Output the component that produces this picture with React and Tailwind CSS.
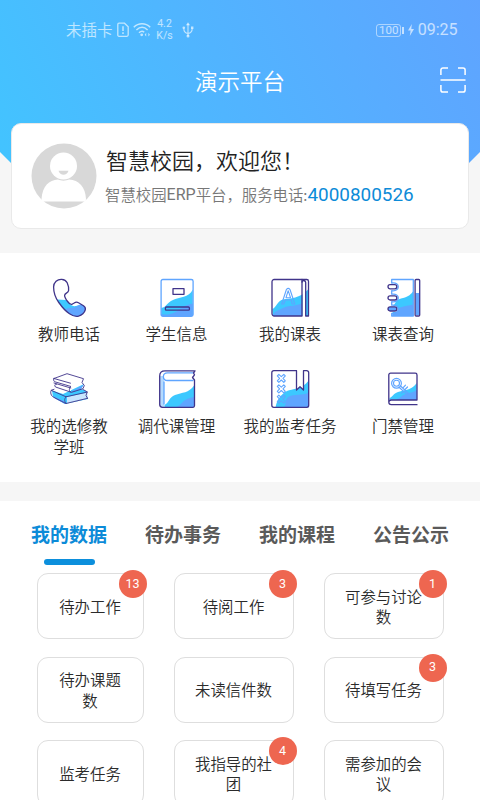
import React, { useState } from "react";

const NAVY = "#40348a";
const BLUE = "#5fa5ff";
const CYAN = "#3cc8ff";

const Icon = ({ children }) => (
  <svg
    viewBox="0 0 40 40"
    className="h-10 w-10 shrink-0"
    fill="none"
    strokeWidth="1.3"
    strokeLinejoin="round"
    strokeLinecap="round"
  >
    {children}
  </svg>
);

const handset =
  "M12.7 1.3C8.5 1 4.6 4.3 4.6 9C4.6 14.5 6.5 20 9.8 24.5C13 29 17 33.5 20.5 35.8C23.5 37.8 27 38.8 29.5 38.2C32.5 37.4 35.5 34.5 36.3 31.8C36.7 30 36 28.7 34.5 27.7L29.5 24.7C28 23.8 26.5 24 25.2 25L23 26.3C21.3 27 20 25.4 18.6 23.5C17 21.3 15.6 19.3 15.6 17.4C15.6 15 19.2 15.3 19.6 12.5C19.8 10.5 19.4 7.3 18.2 4.7C17 2.4 15 1.5 12.7 1.3Z";

const PhoneIcon = () => (
  <Icon>
    <clipPath id="handset">
      <path d={handset} />
    </clipPath>
    <g clipPath="url(#handset)">
      <path d="M0 23C6 20.5 12 22 17 22C20 24 22 29 27 28L40 24V40H0Z" fill={CYAN} />
      <path d="M14 34C18 27 24 32 29 27.5C32 25.5 36 27 38 28V40H16Z" fill={BLUE} />
    </g>
    <path d={handset} stroke={NAVY} />
  </Icon>
);

const StudentIcon = () => (
  <Icon>
    <path d="M4.3 30C9 29.5 10 24.5 16 22C22 19.3 32 19.5 35.8 11.5V38H4.3Z" fill={CYAN} />
    <path d="M4.3 36C12 38 19 34.5 23 31C27 27.5 32 26.5 35.8 25.5V38H4.3Z" fill={BLUE} />
    <rect x="4.1" y="1.5" width="32" height="36.8" rx="1.8" stroke={BLUE} />
    <rect x="16" y="10.7" width="11" height="5.6" stroke={NAVY} />
    <rect x="8.4" y="29" width="24" height="3.2" rx="1" stroke={NAVY} />
  </Icon>
);

const TimetableIcon = () => (
  <Icon>
    <path d="M2.5 31C6 30 7 23 13 21.5C20 20 30 21 38.5 11V38H3Z" fill={CYAN} />
    <path d="M3 38C4 33 8 32.5 12 30.5C18 27 22 29 32 25.5V38Z" fill={BLUE} />
    <path d="M32.5 4V38H35.5V4Z" fill="#fff" />
    <path d="M4.2 1.5H32V38H4.2A2.2 2.2 0 0 1 2 35.8V3.7A2.2 2.2 0 0 1 4.2 1.5Z" stroke={NAVY} />
    <path d="M32 1.5H36.7A1.8 1.8 0 0 1 38.5 3.3V38H35.7V4.5C35.7 2.5 32.5 2 32 4" stroke={NAVY} />
    <path
      d="M11.7 26L16.4 11.5Q18.2 9.2 20 11.5L24.8 26H22.3L21.2 22H15.2L13.8 26ZM16 19.7H20.5L18.2 12.7Z"
      stroke={BLUE}
      strokeWidth="1.1"
    />
  </Icon>
);

const NotebookIcon = () => (
  <Icon>
    <path d="M9.5 28C13 26 12 22 18 20.5C24 19.2 27 17.5 30 13.5V38H9.5Z" fill={CYAN} />
    <path d="M9.5 35C14 34 13 31 17 29.5C22 27.5 26 28 30 26.5V38H9.5Z" fill={BLUE} />
    <path
      d="M6 5.7H11C16.5 5.5 16.5 12 11 11.9H6ZM6 16.9H11C16.5 16.7 16.5 23 11 22.9H6ZM6 27.9H11C16.5 27.7 16.5 34 11 33.9H6Z"
      fill="#fff"
    />
    <path
      d="M8.7 5V1.5H30.3V38H8.7V35.5M8.7 5C17.5 3.5 17.5 14 8.7 12.7V16.2C17.5 14.7 17.5 25 8.7 23.7V27.2C17.5 25.7 17.5 36.5 8.7 35.5"
      stroke={BLUE}
    />
    <rect x="5" y="6.7" width="8.8" height="4.2" rx="2.1" fill="#fff" stroke={NAVY} />
    <rect x="5" y="17.8" width="8.8" height="4.2" rx="2.1" fill="#fff" stroke={NAVY} />
    <rect x="5" y="28.8" width="8.8" height="4.2" rx="2.1" fill={BLUE} stroke={NAVY} />
    <path d="M32.5 15H36.5V37H32.5Z" fill={BLUE} />
    <rect x="32.1" y="1.5" width="4.6" height="36.5" rx="1" stroke={NAVY} />
  </Icon>
);

const BooksIcon = () => (
  <Icon>
    <path d="M3 20.5L14 24L35 14L32 19L37 21L39 29L16 34L4 27Z" fill={CYAN} />
    <path d="M20 23L35 14.5L32 19L21 23ZM4 26L15 31L16 34L6 28.5Z" fill={BLUE} />
    <path d="M18 27L38.5 22.5V28.5L18 33.5Z" fill="#c9e6ff" />
    <path d="M6 9L18 4L34 9L22 15.5ZM7 14L22 18.5V21L7 16.5Z" fill="#fff" />
    <path
      d="M5 8.5L18 3.7L34.5 8.7L33 12.5L35.3 15.5L34 18.7L22.5 22.3C19.5 21.5 20 17.8 22 16.5L5.5 11.7C4.5 10.6 4.2 9.4 5 8.5ZM5 8.5L21.5 13.2M5 13L21.8 18M7.5 14.2C6 13.5 5 15.5 6.5 17L21.5 22"
      stroke={NAVY}
      strokeWidth="0.9"
    />
    <path
      d="M5 19.3L2.3 20.2C1 22.5 2 25.8 4.5 27.2L17 33.5L38.5 28.3M2.3 20.3L17 26.8L38.5 22L34 19.5M17 26.8C15 29 15.5 32 17 33.5M38 22.5L37 25.5L38.5 28.3"
      stroke={NAVY}
      strokeWidth="0.9"
    />
  </Icon>
);

const BookIcon = () => (
  <Icon>
    <path d="M7.5 35C12 33 12 27 18 25C25 22.5 32 23 37 15.5V37.3H7.5Z" fill={CYAN} />
    <path d="M18 37.5C24 36 25 31 30 29C33 27.7 35 27.5 37 27V37.3Z" fill={BLUE} />
    <path d="M2.8 6H7V37.5C4 37.5 3 37 2.8 34Z" fill="#b5dbff" />
    <path d="M7 12V34M36 2.9H10.5C5 3 5 10.3 10.5 10.5H36" stroke={BLUE} />
    <path
      d="M38 .9H8C4.5 .9 2.7 3 2.7 6V34.5A2.8 2.8 0 0 0 5.5 37.3H36A1.5 1.5 0 0 0 37.5 35.8V10L35.5 7.5L37.5 4.8L36.5 3Z"
      stroke={NAVY}
    />
  </Icon>
);

const ExamIcon = () => (
  <Icon>
    <path d="M5.5 37.3C7 30 10 25 17 21C22 18.5 32 20 38.7 10.5V37.3Z" fill={CYAN} />
    <path d="M14 37.3C17 34 14 28 20 26C28 23.5 35 26 38.7 22V37.3Z" fill={BLUE} />
    <path d="M26.5 .7H33.5V20L30 16.7L26.5 20Z" fill="#fff" />
    <path
      d="M26.3 .7H3.8A2 2 0 0 0 1.8 2.7V35.3A2 2 0 0 0 3.8 37.3H36.7A2 2 0 0 0 38.7 35.3V2.7A2 2 0 0 0 36.7 .7H33.5V20L30 16.7L26.5 20V.7"
      stroke={NAVY}
    />
    {[8.3, 18.8, 29.2].map((y) => (
      <path
        key={y}
        transform={`translate(11.3 ${y})`}
        d="M-4 -2.5L-2.5 -4L0 -1.7L2.5 -4L4 -2.5L1.7 0L4 2.5L2.5 4L0 1.7L-2.5 4L-4 2.5L-1.7 0Z"
        stroke={BLUE}
        strokeWidth="1.1"
      />
    ))}
  </Icon>
);

const AccessIcon = () => (
  <Icon>
    <path d="M6.5 28C10 27 10 23.5 15 22C23 19.5 29 20 33.7 13V29.7H6.5Z" fill={CYAN} />
    <path d="M11 30C17 29.5 18 25 24 23.5C28 22.5 31 22 33.7 20V30Z" fill={BLUE} />
    <path
      d="M34 30H8.3C5 30 5 34.7 8.3 34.7H34M5.8 32V5A1.8 1.8 0 0 1 7.6 3.2H32.2A1.8 1.8 0 0 1 34 5V30"
      stroke={NAVY}
    />
    <circle cx="13.5" cy="13.3" r="4.9" stroke={BLUE} strokeWidth="1.2" />
    <circle cx="13.5" cy="13.3" r="3" stroke={BLUE} strokeWidth="1.1" />
    <path
      d="M17.3 15.8L25.5 23.5L24.2 24.6L16 17.2M20.2 17.7L22.5 15.2M22 19.5L24.5 17M20.5 21.5L18.8 23.2"
      stroke={BLUE}
      strokeWidth="1.2"
    />
  </Icon>
);

const menus = [
  { label: "教师电话", icon: PhoneIcon },
  { label: "学生信息", icon: StudentIcon },
  { label: "我的课表", icon: TimetableIcon },
  { label: "课表查询", icon: NotebookIcon },
  { label: "我的选修教学班", icon: BooksIcon },
  { label: "调代课管理", icon: BookIcon },
  { label: "我的监考任务", icon: ExamIcon },
  { label: "门禁管理", icon: AccessIcon },
];

const tabs = ["我的数据", "待办事务", "我的课程", "公告公示"];

const cards = [
  { label: "待办工作", count: 13 },
  { label: "待阅工作", count: 3 },
  { label: "可参与讨论数", count: 1 },
  { label: "待办课题数" },
  { label: "未读信件数" },
  { label: "待填写任务", count: 3 },
  { label: "监考任务" },
  { label: "我指导的社团", count: 4 },
  { label: "需参加的会议" },
];

const StatusBar = () => (
  <div className="flex h-[60px] items-center pl-[66px] pr-[22.5px] text-white/65">
    <span className="text-[15.5px] leading-none">未插卡</span>
    <svg viewBox="0 0 12 16" className="ml-[4px] h-4 w-3" fill="none" stroke="currentColor" strokeWidth="1.3">
      <path d="M2 1.2H7.5L11.2 4.8V12.8A1.5 1.5 0 0 1 9.7 14.3H2A1.2 1.2 0 0 1 .8 13V2.4A1.2 1.2 0 0 1 2 1.2Z" />
      <path d="M6 4.3V9M6 10.3V12" strokeWidth="1.5" />
    </svg>
    <svg viewBox="0 0 18 16" className="ml-[4px] h-4 w-[18px]" fill="none" stroke="currentColor" strokeWidth="1.5">
      <path d="M.8 5.2C5.5 .5 12.5 .5 17.2 5.2M3.4 8C7 4.6 11.2 4.6 14.6 8M6 10.7C7.8 9 10 9 11.2 10.2" />
      <circle cx="8.7" cy="12.8" r="1.4" fill="currentColor" stroke="none" />
      <path d="M13.2 10.8L11.7 12.7L13.2 14.6ZM15.4 10.8L16.9 12.7L15.4 14.6Z" fill="currentColor" stroke="none" />
    </svg>
    <div className="ml-[5px] w-[18px] text-center font-[Roboto] text-[10.5px] font-normal leading-[12.5px]">
      <div>4.2</div>
      <div>K/s</div>
    </div>
    <svg viewBox="0 0 12 16" className="ml-[8px] h-4 w-3" fill="none" stroke="currentColor" strokeWidth="1.1">
      <path d="M6 2V14M6 11.5C3 11 1.8 9.7 1.8 6.5M6 11.5C9 11 10.2 9.7 10.2 6.5" />
      <path d="M6 .2L8 3.2H4Z" fill="currentColor" stroke="none" />
      <circle cx="1.8" cy="5.7" r="1.3" fill="currentColor" stroke="none" />
      <circle cx="6" cy="14" r="1.5" fill="currentColor" stroke="none" />
      <path d="M9 4.5H11.4V7H9Z" fill="currentColor" stroke="none" />
    </svg>
    <div className="ml-auto flex items-center font-[Roboto] font-normal">
      <span className="flex h-[13px] w-[25px] items-center justify-center rounded-[3px] border border-white/50 text-[11.5px] leading-[11px]">
        100
      </span>
      <span className="ml-px h-[7px] w-[1.5px] bg-white/65"></span>
      <svg viewBox="0 0 6 12" className="ml-[4px] h-3 w-1.5" fill="currentColor">
        <path d="M3.8 0L0 6.6H2.6L1.8 12L6 5H3.3Z" />
      </svg>
      <span className="ml-[4px] text-[16px] leading-none">09:25</span>
    </div>
  </div>
);

const App = () => {
  const [activeTab, setActiveTab] = useState(tabs[0]);

  return (
    <div className="flex h-[800px] w-[480px] flex-col overflow-hidden bg-white font-['Noto_Sans_CJK_SC',sans-serif] font-[350] text-[#2b2b2b]">
      <header className="grid h-[253px] shrink-0 bg-[#f6f6f6]">
        <div className="h-[175px] bg-[linear-gradient(65deg,#42c4ff_0%,#50b5ff_45%,#5fa4ff_100%)] [clip-path:polygon(0_0,100%_0,100%_152px,457px_175px,23px_175px,0_152px)] [grid-area:1/1]"></div>

        <div className="z-10 flex flex-col [grid-area:1/1]">
          <StatusBar />

          <div className="grid h-[40px] grid-cols-[1fr_auto_1fr] items-center px-[14px] text-white">
            <h1 className="col-start-2 text-[22.5px] leading-none">演示平台</h1>
            <svg
              viewBox="0 0 26 26"
              className="h-[26px] w-[26px] justify-self-end"
              fill="none"
              stroke="#fff"
              strokeWidth="1.5"
            >
              <path d="M.9 8V3A2.1 2.1 0 0 1 3 .9H8M18 .9H23A2.1 2.1 0 0 1 25.1 3V8M25.1 18V23A2.1 2.1 0 0 1 23 25.1H18M8 25.1H3A2.1 2.1 0 0 1 .9 23V18M.5 13H25.5" />
            </svg>
          </div>

          <div className="mx-[11px] mt-[23px] flex h-[106px] items-center rounded-[10px] border border-[#e9e9e9] bg-white pl-[19px]">
            <svg viewBox="0 0 66 66" className="h-[66px] w-[66px] shrink-0">
              <circle cx="33" cy="33" r="32.5" fill="#d8d8d8" />
              <circle cx="32.5" cy="23" r="13.5" fill="#fff" />
              <path d="M27.5 27.7H37.5C36 33 29 33 27.5 27.7Z" fill="#d8d8d8" />
              <path
                d="M10.5 56C11.5 43 18 37 27 36.5C30 38 35 38 38 36.5C48 37 54.5 44 55 56C55 58 54 58.5 52 58.5H13C11.5 58.5 10.5 58 10.5 56Z"
                fill="#fff"
              />
            </svg>
            <div className="ml-[8px] whitespace-nowrap pt-[4px]">
              <p className="pl-px text-[22px] leading-[32px] text-[#222]">智慧校园，欢迎您！</p>
              <p className="flex h-[38px] items-center pt-[2px] text-[15.4px] text-[#777]">
                智慧校园<span className="font-[Roboto] text-[16px] font-normal">ERP</span>平台，服务电话:
                <span className="font-[Roboto] text-[18.9px] font-normal text-[#0c8bd8]">4000800526</span>
              </p>
            </div>
          </div>
        </div>
      </header>

      <nav className="grid h-[229px] shrink-0 grid-cols-[108px_107px_120px_106px] content-start pl-[15px] pt-[25px]">
        {menus.map(({ label, icon: MenuIcon }, index) => (
          <button
            key={label}
            className={`flex flex-col items-center justify-start px-3 text-[15.5px] leading-[21px] ${
              index < 4 ? "h-[92px]" : "h-[96px]"
            }`}
          >
            <MenuIcon />
            <span className="mt-[5px]">{label}</span>
          </button>
        ))}
      </nav>

      <div className="h-[19px] shrink-0 bg-[#f6f6f6]"></div>

      <section>
        <div className="flex h-[72px] gap-[38px] pl-[31px] pt-[19px]">
          {tabs.map((tab) => (
            <button
              key={tab}
              onClick={() => setActiveTab(tab)}
              className={`flex w-[76px] flex-col items-center whitespace-nowrap text-[19px] font-bold leading-[28px] ${
                activeTab === tab ? "text-[#0c8bd8]" : "text-[#5a5a5a]"
              }`}
            >
              {tab}
              {activeTab === tab && (
                <span className="mt-[11px] h-[6px] w-[51px] rounded-full bg-[#0c8fdc]"></span>
              )}
            </button>
          ))}
        </div>

        <div className="grid auto-rows-[66px] grid-cols-[107px_120px_120px] gap-x-[30px] gap-y-[17.5px] pl-[36.5px]">
          {cards.map((card) => (
            <div
              key={card.label}
              className="relative flex items-center justify-center rounded-[11px] border border-[#dedede] px-[19px] text-center text-[15.4px] leading-[20.5px]"
            >
              {card.label}
              {card.count && (
                <span className="absolute -right-[4px] -top-[4px] flex h-7 w-7 items-center justify-center rounded-full bg-[#ee6650] font-[Roboto] text-[12.5px] font-normal leading-none text-white">
                  {card.count}
                </span>
              )}
            </div>
          ))}
        </div>
      </section>
    </div>
  );
};

export default App;
